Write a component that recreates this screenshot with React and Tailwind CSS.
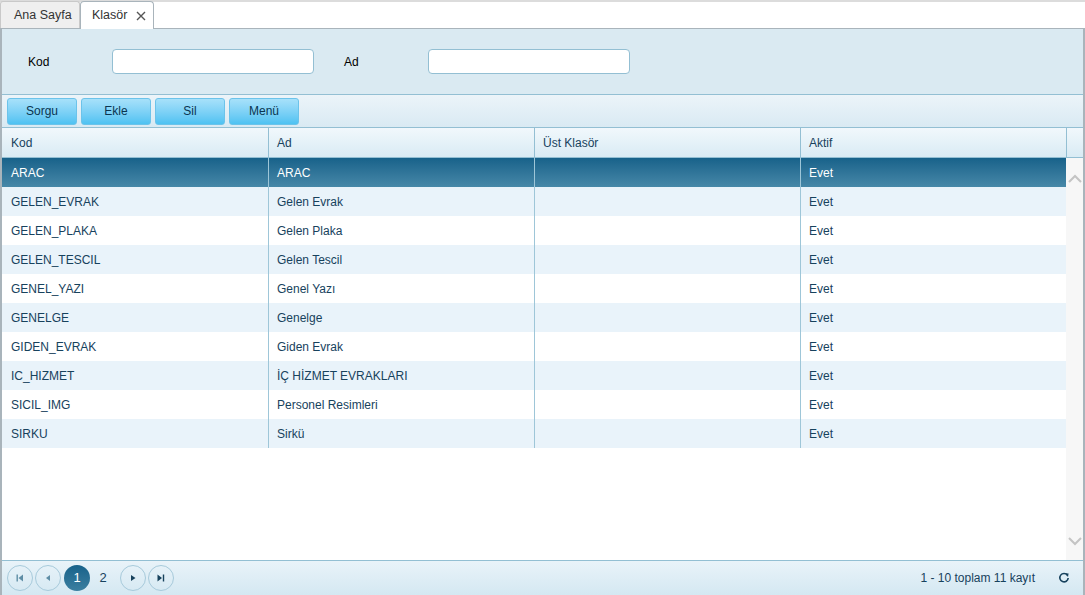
import { useState } from "react";

const rows = [
  { kod: "ARAC", ad: "ARAC", ust: "", aktif: "Evet" },
  { kod: "GELEN_EVRAK", ad: "Gelen Evrak", ust: "", aktif: "Evet" },
  { kod: "GELEN_PLAKA", ad: "Gelen Plaka", ust: "", aktif: "Evet" },
  { kod: "GELEN_TESCIL", ad: "Gelen Tescil", ust: "", aktif: "Evet" },
  { kod: "GENEL_YAZI", ad: "Genel Yazı", ust: "", aktif: "Evet" },
  { kod: "GENELGE", ad: "Genelge", ust: "", aktif: "Evet" },
  { kod: "GIDEN_EVRAK", ad: "Giden Evrak", ust: "", aktif: "Evet" },
  { kod: "IC_HIZMET", ad: "İÇ HİZMET EVRAKLARI", ust: "", aktif: "Evet" },
  { kod: "SICIL_IMG", ad: "Personel Resimleri", ust: "", aktif: "Evet" },
  { kod: "SIRKU", ad: "Sirkü", ust: "", aktif: "Evet" },
];

function Tabs() {
  return (
    <div className="flex items-end h-[29px] bg-white border-t-2 border-[#dcdcdc] border-b border-b-[#a9b4bb]">
      <div className="h-[27px] w-[80px] flex items-center pl-[13px] bg-[#efefef] border border-[#c9c9c9] border-b-0 rounded-t-[3px] text-[12.5px] text-[#333]">
        Ana Sayfa
      </div>
      <div className="h-[28px] w-[74px] -mb-px flex items-center justify-between pl-[11px] pr-[7px] bg-white border border-[#a9b4bb] border-b-0 rounded-t-[4px] text-[12.5px] text-[#333]">
        Klasör
        <svg width="10" height="10" viewBox="0 0 10 10" className="mt-[1px]">
          <path d="M1 1 L9 9 M9 1 L1 9" stroke="#555" strokeWidth="1.4" />
        </svg>
      </div>
    </div>
  );
}

function Filters() {
  return (
    <div className="h-[66px] bg-[#daeaf2] flex items-center border-b border-[#93bfd3]">
      <label className="w-[110px] pl-[26px] text-[12px] text-black">Kod</label>
      <input className="w-[202px] h-[25px] bg-white border border-[#93bfd3] rounded-[4px] outline-none" />
      <label className="w-[114px] pl-[30px] text-[12px] text-black">Ad</label>
      <input className="w-[202px] h-[25px] bg-white border border-[#93bfd3] rounded-[4px] outline-none" />
    </div>
  );
}

function Toolbar() {
  return (
    <div className="h-[33px] flex items-center gap-[4px] pl-[5px] bg-gradient-to-b from-[#ecf4f9] to-[#d9eaf3] border-b border-[#93bfd3]">
      {["Sorgu", "Ekle", "Sil", "Menü"].map((b) => (
        <button
          key={b}
          className="w-[70px] h-[27px] rounded-[3px] border border-[#6cc3ea] bg-gradient-to-b from-[#a7e1fa] to-[#4ec2f2] text-[12px] text-[#0b3550]"
        >
          {b}
        </button>
      ))}
    </div>
  );
}

function Grid() {
  const [sel, setSel] = useState(0);
  const cols = ["Kod", "Ad", "Üst Klasör", "Aktif"];
  return (
    <div className="flex-1 flex flex-col min-h-0">
      <div className="flex h-[30px] bg-gradient-to-b from-[#f1f8fc] to-[#d9ebf4] border-b border-[#93bfd3]">
        {cols.map((c, i) => (
          <div
            key={c}
            className={`flex items-center text-[12px] text-[#17425d] ${i === 0 ? "w-[266px] pl-[9px]" : "w-[266px] pl-[8px] border-l border-[#93bfd3]"}`}
          >
            {c}
          </div>
        ))}
        <div className="flex-1 border-l border-[#93bfd3]" />
      </div>
      <div className="flex flex-1 min-h-0">
        <div className="w-[1064px]">
          {rows.map((r, i) => {
            const active = i === sel;
            const bg = active
              ? "bg-gradient-to-b from-[#17628a] to-[#4688a8] text-white"
              : i % 2 === 1
              ? "bg-[#e9f3fa] text-[#17425d]"
              : "bg-white text-[#17425d]";
            return (
              <div key={r.kod} onClick={() => setSel(i)} className={`flex h-[29px] cursor-pointer ${bg}`}>
                {[r.kod, r.ad, r.ust, r.aktif].map((v, j) => (
                  <div
                    key={j}
                    className={`flex items-center text-[12px] ${j === 0 ? "w-[266px] pl-[9px]" : "w-[266px] pl-[8px] border-l border-[#9ec6d8]"}`}
                  >
                    {v}
                  </div>
                ))}
              </div>
            );
          })}
        </div>
        <div className="flex-1 bg-[#f7f7f7] flex flex-col items-center justify-between pt-[16px] pb-[14px]">
          <svg width="14" height="9" viewBox="0 0 14 9">
            <path d="M1 8 L7 2 L13 8" fill="none" stroke="#c4c4c4" strokeWidth="2" />
          </svg>
          <svg width="14" height="9" viewBox="0 0 14 9">
            <path d="M1 1 L7 7 L13 1" fill="none" stroke="#c4c4c4" strokeWidth="2" />
          </svg>
        </div>
      </div>
    </div>
  );
}

function PagerBtn({ children }) {
  return (
    <button className="w-[26px] h-[26px] rounded-full border border-[#a7cadb] flex items-center justify-center">
      {children}
    </button>
  );
}

function Pager() {
  return (
    <div className="h-[35px] flex items-center bg-gradient-to-b from-[#e9f3f9] to-[#d4e8f2] border-t border-[#93bfd3] pl-[5px] pr-[13px]">
      <div className="flex items-center gap-[2px]">
        <PagerBtn>
          <svg width="8" height="8" viewBox="0 0 8 8">
            <rect x="0.5" y="0.5" width="1.4" height="7" fill="#5f8ea6" />
            <path d="M7 0.5 L2.5 4 L7 7.5Z" fill="#5f8ea6" />
          </svg>
        </PagerBtn>
        <PagerBtn>
          <svg width="8" height="8" viewBox="0 0 8 8">
            <path d="M6 1 L2 4 L6 7Z" fill="#5f8ea6" />
          </svg>
        </PagerBtn>
        <div className="ml-[1px] w-[26px] h-[26px] rounded-full bg-gradient-to-b from-[#17628a] to-[#3b7fa0] text-white text-[13px] flex items-center justify-center">
          1
        </div>
        <div className="w-[26px] pr-[4px] text-center text-[13px] text-[#17425d]">2</div>
        <PagerBtn>
          <svg width="8" height="8" viewBox="0 0 8 8">
            <path d="M2 1 L6.5 4 L2 7Z" fill="#17425d" />
          </svg>
        </PagerBtn>
        <PagerBtn>
          <svg width="8" height="8" viewBox="0 0 8 8">
            <path d="M0.5 0.5 L5 4 L0.5 7.5Z" fill="#17425d" />
            <rect x="5.8" y="0.5" width="1.4" height="7" fill="#17425d" />
          </svg>
        </PagerBtn>
      </div>
      <div className="ml-auto text-[12px] text-[#17425d]">1 - 10 toplam 11 kayıt</div>
      <svg width="12" height="12" viewBox="0 0 12 12" className="ml-[23px]">
        <path d="M9.4 3.2 A4.2 4.2 0 1 0 10.2 6" fill="none" stroke="#17425d" strokeWidth="1.6" />
        <path d="M7 1.2 L10.6 1.4 L10 5Z" fill="#17425d" />
      </svg>
    </div>
  );
}

export default function App() {
  return (
    <div className="w-[1085px] h-[595px] bg-white flex flex-col overflow-hidden" style={{ fontFamily: '"Liberation Sans", Arial, sans-serif' }}>
      <Tabs />
      <div className="flex-1 flex flex-col min-h-0 border-l-2 border-r-2 border-l-[#a9b4bb] border-r-[#a9b4bb]">
        <Filters />
        <Toolbar />
        <Grid />
        <Pager />
      </div>
    </div>
  );
}
